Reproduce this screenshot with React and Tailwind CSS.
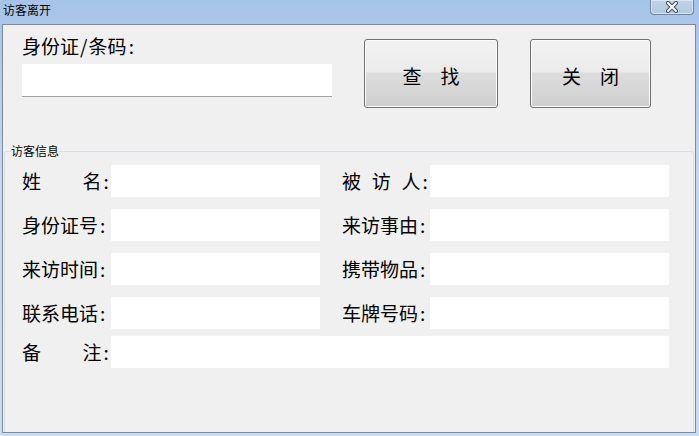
import React from "react";

const F = "font-['Noto_Sans_CJK_SC','Noto_Sans',sans-serif]";

function Colon() {
  return <span className="inline-block w-[9.5px] text-center">:</span>;
}

function Label({ parts, w }) {
  if (parts.length === 1) {
    return (
      <div className={`${w} shrink-0 whitespace-nowrap text-[19px] leading-[32px] text-black`}>
        {parts[0]}
        <Colon />
      </div>
    );
  }
  return (
    <div className={`${w} shrink-0 flex justify-between whitespace-nowrap text-[19px] leading-[32px] text-black`}>
      {parts.map((p, i) => (
        <span key={i}>
          {p}
          {i === parts.length - 1 ? <Colon /> : null}
        </span>
      ))}
    </div>
  );
}

function Field({ className }) {
  return <div className={`h-[32px] bg-white ${className}`} />;
}

function Row({ l1, l2, className = "" }) {
  return (
    <div className={`flex items-center ${className}`}>
      <Label parts={l1} w="w-[89px]" />
      <Field className="w-[209px]" />
      <div className="w-[22px]" />
      <Label parts={l2} w="w-[88px]" />
      <Field className="w-[239px]" />
    </div>
  );
}

function Btn({ a, b, w }) {
  return (
    <div
      className={`${w} h-[69px] mt-[4px] rounded-[3px] border border-[#707070] shadow-[inset_0_0_0_1px_#fbfbfb] bg-[linear-gradient(to_bottom,#f2f2f2_0%,#ebebeb_48%,#dddddd_49%,#cfcfcf_100%)] flex items-center justify-center text-[19px] leading-[24px] text-black pt-[4px]`}
    >
      <span>{a}</span>
      <span className="inline-block w-[19px]" />
      <span>{b}</span>
    </div>
  );
}

export default function App() {
  return (
    <div className={`${F} w-[699px] h-[436px] flex flex-col bg-[linear-gradient(to_bottom,#a6c4e9_0%,#c3d8f1_40%,#c8dcf2_100%)] overflow-hidden`}>
      {/* title bar */}
      <div className="h-[24px] flex items-start shrink-0">
        <div className="pl-[3px] mt-[2px] text-[12px] leading-[16px] text-black">访客离开</div>
        <div className="ml-auto mr-[5px] w-[44px] h-[15px] rounded-b-[4px] border border-t-0 border-[#6f84a3] bg-[linear-gradient(to_bottom,#c2d3ea,#b2c7e2)] shadow-[inset_0_0_0_1px_#dbe6f4] flex items-center justify-center">
          <svg width="16" height="12" viewBox="0 0 16 12">
            <path d="M4 2 L12 10 M12 2 L4 10" stroke="#3b4b60" strokeWidth="4" strokeLinecap="round" />
            <path d="M4 2 L12 10 M12 2 L4 10" stroke="#ffffff" strokeWidth="2" strokeLinecap="round" />
          </svg>
        </div>
      </div>
      {/* client area */}
      <div className="flex-1 flex pl-[2px] pr-[3px] pb-[3px]">
        <div className="flex-1 flex flex-col border border-[#7c8a9c] bg-[#f0f0f0]">
          {/* top row */}
          <div className="flex items-start pl-[19px] pt-[10px] shrink-0">
            <div className="w-[310px] flex flex-col">
              <div className="h-[22px] text-[19px] leading-[22px] text-black whitespace-nowrap">
                身份证<span className="inline-block w-[9.5px] text-center">/</span>条码
                <Colon />
              </div>
              <div className="mt-[7px] h-[33px] bg-white border-b border-[#a0a0a0]" />
            </div>
            <div className="ml-[32px]">
              <Btn a="查" b="找" w="w-[134px]" />
            </div>
            <div className="ml-[32px]">
              <Btn a="关" b="闭" w="w-[121px]" />
            </div>
          </div>
          {/* group box */}
          <fieldset className="mt-[36px] mx-[1px] flex-1 border border-b-0 border-[#d5dfe5] rounded-t-[3px]">
            <legend className="ml-[6px] text-[12px] leading-[14px] text-black">访客信息</legend>
            <div className="pl-[17px] pt-[7px]">
              <Row l1={["姓", "名"]} l2={["被", "访", "人"]} />
              <Row className="mt-[12px]" l1={["身份证号"]} l2={["来访事由"]} />
              <Row className="mt-[12px]" l1={["来访时间"]} l2={["携带物品"]} />
              <Row className="mt-[12px]" l1={["联系电话"]} l2={["车牌号码"]} />
              <div className="flex items-center mt-[7px]">
                <Label parts={["备", "注"]} w="w-[89px]" />
                <Field className="w-[558px]" />
              </div>
            </div>
          </fieldset>
        </div>
      </div>
    </div>
  );
}
